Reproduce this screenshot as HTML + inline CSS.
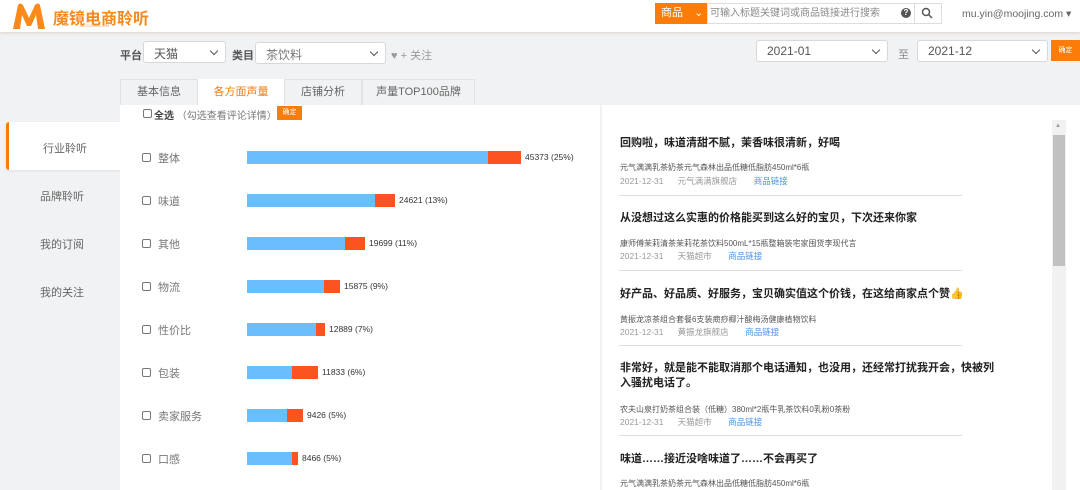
<!DOCTYPE html>
<html><head><meta charset="utf-8"><style>
*{margin:0;padding:0;box-sizing:border-box}
body{width:1080px;height:490px;overflow:hidden;background:#f1f2f4;font-family:"Liberation Sans","Noto Sans CJK SC",sans-serif;position:relative;color:#333}
.a{position:absolute}
.hdr{left:0;top:0;width:1080px;height:32px;background:#fff;box-shadow:0 1px 3px rgba(200,180,160,.5)}
.sel{background:#fff;border:1px solid #d8d8d8;border-radius:3px;height:22px;font-size:12px;color:#555;padding:3px 10px}
.sel:after{content:"";position:absolute;right:8px;top:6px;width:5px;height:5px;border-right:1.5px solid #555;border-bottom:1.5px solid #555;transform:rotate(45deg)}
.tab{top:79px;height:26px;font-size:11px;color:#666;text-align:center;line-height:24px;background:#f1f2f4;border:1px solid #e2e2e2;border-bottom:none}
.side{font-size:11px;color:#666;left:40px}
.cb{width:9px;height:9px;border:1px solid #777;border-radius:2px;background:#fff}
.lbl{font-size:11px;color:#777;left:158px}
.bar{height:13px;left:247px}
.num{font-size:8.5px;color:#333}
.t{left:620px;font-size:11px;font-weight:bold;color:#222;width:362px;line-height:15px;white-space:nowrap}
.p{left:620px;font-size:8px;color:#555}
.d{left:620px;font-size:8.5px;color:#999;white-space:pre}
.d b{font-weight:normal;color:#4a90e2}
.hr{left:619px;width:343px;height:1px;background:#ddd}
</style></head><body>
<div class="a hdr"></div>
<svg class="a" style="left:11px;top:2px" width="36" height="28"><path d="M2 27 L7 3 Q9 0 12 3 L18 16 L24 3 Q27 0 29 3 L34 27 L27 27 L25 13 L20 24 L16 24 L11 13 L9 27 Z" fill="#fb8a1b"/></svg>
<div class="a" style="left:53px;top:5px;font-size:16px;font-weight:bold;color:#f78a1e">魔镜电商聆听</div>
<div class="a" style="left:80px;top:23px;font-size:4px;color:#f3a050">MOOJING.COM</div>
<div class="a" style="left:655px;top:3px;width:52px;height:21px;background:#fb7c09;color:#fff;font-size:11px;line-height:21px;padding-left:6px">商品 <span style="margin-left:8px">⌄</span></div>
<div class="a" style="left:707px;top:3px;width:235px;height:21px;border:1px solid #ddd;background:#fff;font-size:10px;color:#888;line-height:19px;padding-left:2px">可输入标题关键词或商品链接进行搜索</div>
<div class="a" style="left:901px;top:8px;width:10px;height:10px;border-radius:50%;background:#555;color:#fff;font-size:8px;text-align:center;line-height:10px;font-weight:bold">?</div>
<div class="a" style="left:914px;top:3px;width:28px;height:21px;border-left:1px solid #ddd"></div>
<svg class="a" style="left:921px;top:7px" width="12" height="12"><circle cx="5" cy="5" r="3.5" fill="none" stroke="#555" stroke-width="1.5"/><line x1="7.5" y1="7.5" x2="11" y2="11" stroke="#555" stroke-width="1.5"/></svg>
<div class="a" style="left:962px;top:8px;font-size:10.5px;color:#666">mu.yin@moojing.com ▾</div>

<div class="a" style="left:120px;top:47px;font-size:11px;font-weight:bold;color:#555">平台</div>
<div class="a sel" style="left:143px;top:41px;width:83px">天猫</div>
<div class="a" style="left:232px;top:47px;font-size:11px;font-weight:bold;color:#555">类目</div>
<div class="a sel" style="left:255px;top:42px;width:131px;color:#777">茶饮料</div>
<div class="a" style="left:391px;top:47px;font-size:11px;color:#999">♥ + 关注</div>
<div class="a sel" style="left:756px;top:40px;width:132px">2021-01</div>
<div class="a" style="left:898px;top:46px;font-size:11px;color:#888">至</div>
<div class="a sel" style="left:917px;top:40px;width:131px">2021-12</div>
<div class="a" style="left:1051px;top:40px;width:29px;height:21px;background:#fb7c09;color:#fff;font-size:7px;line-height:21px;text-align:center">确定</div>

<div class="a tab" style="left:120px;width:78px">基本信息</div>
<div class="a tab" style="left:198px;width:86px;background:#fff;color:#fb7c09;border-color:#fff">各方面声量</div>
<div class="a tab" style="left:284px;width:78px">店铺分析</div>
<div class="a tab" style="left:362px;width:113px">声量TOP100品牌</div>

<div class="a" style="left:6px;top:122px;width:114px;height:48px;background:#fff;border-left:3px solid #fb7c09;border-radius:3px 0 0 3px;box-shadow:0 1px 3px rgba(0,0,0,.08)"></div>
<div class="a side" style="left:43px;top:140px">行业聆听</div>
<div class="a side" style="top:188px">品牌聆听</div>
<div class="a side" style="top:236px">我的订阅</div>
<div class="a side" style="top:284px">我的关注</div>

<div class="a" style="left:120px;top:105px;width:480px;height:385px;background:#fff"></div>
<div class="a cb" style="left:143px;top:109px"></div>
<div class="a" style="left:154px;top:107px;font-size:10px;color:#444"><b>全选</b> <span style="color:#777">（勾选查看评论详情）</span></div>
<div class="a" style="left:277px;top:106px;width:25px;height:14px;background:#fb7c09;color:#fff;font-size:7px;line-height:14px;text-align:center">确定</div>

<div class="a" style="left:602px;top:105px;width:478px;height:385px;background:#fff"></div>
<div class="a" style="left:1052px;top:120px;width:14px;height:370px;background:#f1f1f1"></div>
<div class="a" style="left:1053px;top:135px;width:12px;height:131px;background:#c1c1c1"></div>
<div class="a" style="left:1055px;top:123px;font-size:6px;color:#999">▲</div>

<div class="a cb" style="left:142px;top:153px"></div><div class="a lbl" style="top:150px">整体</div>
<div class="a bar" style="top:151px;width:241px;background:#69befd"></div><div class="a bar" style="top:151px;left:488px;width:33px;background:#fd5321"></div><div class="a num" style="left:525px;top:152px">45373 (25%)</div>
<div class="a cb" style="left:142px;top:196px"></div><div class="a lbl" style="top:193px">味道</div>
<div class="a bar" style="top:194px;width:128px;background:#69befd"></div><div class="a bar" style="top:194px;left:375px;width:20px;background:#fd5321"></div><div class="a num" style="left:399px;top:195px">24621 (13%)</div>
<div class="a cb" style="left:142px;top:239px"></div><div class="a lbl" style="top:236px">其他</div>
<div class="a bar" style="top:237px;width:98px;background:#69befd"></div><div class="a bar" style="top:237px;left:345px;width:20px;background:#fd5321"></div><div class="a num" style="left:369px;top:238px">19699 (11%)</div>
<div class="a cb" style="left:142px;top:282px"></div><div class="a lbl" style="top:279px">物流</div>
<div class="a bar" style="top:280px;width:77px;background:#69befd"></div><div class="a bar" style="top:280px;left:324px;width:16px;background:#fd5321"></div><div class="a num" style="left:344px;top:281px">15875 (9%)</div>
<div class="a cb" style="left:142px;top:325px"></div><div class="a lbl" style="top:322px">性价比</div>
<div class="a bar" style="top:323px;width:69px;background:#69befd"></div><div class="a bar" style="top:323px;left:316px;width:9px;background:#fd5321"></div><div class="a num" style="left:329px;top:324px">12889 (7%)</div>
<div class="a cb" style="left:142px;top:368px"></div><div class="a lbl" style="top:365px">包装</div>
<div class="a bar" style="top:366px;width:45px;background:#69befd"></div><div class="a bar" style="top:366px;left:292px;width:26px;background:#fd5321"></div><div class="a num" style="left:322px;top:367px">11833 (6%)</div>
<div class="a cb" style="left:142px;top:411px"></div><div class="a lbl" style="top:408px">卖家服务</div>
<div class="a bar" style="top:409px;width:40px;background:#69befd"></div><div class="a bar" style="top:409px;left:287px;width:16px;background:#fd5321"></div><div class="a num" style="left:307px;top:410px">9426 (5%)</div>
<div class="a cb" style="left:142px;top:454px"></div><div class="a lbl" style="top:451px">口感</div>
<div class="a bar" style="top:452px;width:45px;background:#69befd"></div><div class="a bar" style="top:452px;left:292px;width:6px;background:#fd5321"></div><div class="a num" style="left:302px;top:453px">8466 (5%)</div>

<div class="a t" style="top:136px">回购啦，味道清甜不腻，茉香味很清新，好喝</div>
<div class="a p" style="top:162px">元气满满乳茶奶茶元气森林出品低糖低脂肪450ml*6瓶</div>
<div class="a d" style="top:175px">2021-12-31      元气满满旗舰店       <b>商品链接</b></div>
<div class="a hr" style="top:195px"></div>
<div class="a t" style="top:211px">从没想过这么实惠的价格能买到这么好的宝贝，下次还来你家</div>
<div class="a p" style="top:238px">康师傅茉莉清茶茉莉花茶饮料500mL*15瓶整箱装宅家囤货李现代言</div>
<div class="a d" style="top:250px">2021-12-31      天猫超市       <b>商品链接</b></div>
<div class="a hr" style="top:270px"></div>
<div class="a t" style="top:287px">好产品、好品质、好服务，宝贝确实值这个价钱，在这给商家点个赞<span style="color:#f5b830">👍</span></div>
<div class="a p" style="top:314px">黄振龙凉茶组合套餐6支装癍痧椰汁酸梅汤健康植物饮料</div>
<div class="a d" style="top:326px">2021-12-31      黄振龙旗舰店       <b>商品链接</b></div>
<div class="a hr" style="top:345px"></div>
<div class="a t" style="top:361px">非常好，就是能不能取消那个电话通知，也没用，还经常打扰我开会，快被列<br>入骚扰电话了。</div>
<div class="a p" style="top:404px">农夫山泉打奶茶组合装（低糖）380ml*2瓶牛乳茶饮料0乳粉0茶粉</div>
<div class="a d" style="top:416px">2021-12-31      天猫超市       <b>商品链接</b></div>
<div class="a hr" style="top:435px"></div>
<div class="a t" style="top:452px">味道……接近没啥味道了……不会再买了</div>
<div class="a p" style="top:478px">元气满满乳茶奶茶元气森林出品低糖低脂肪450ml*6瓶</div>
</body></html>
